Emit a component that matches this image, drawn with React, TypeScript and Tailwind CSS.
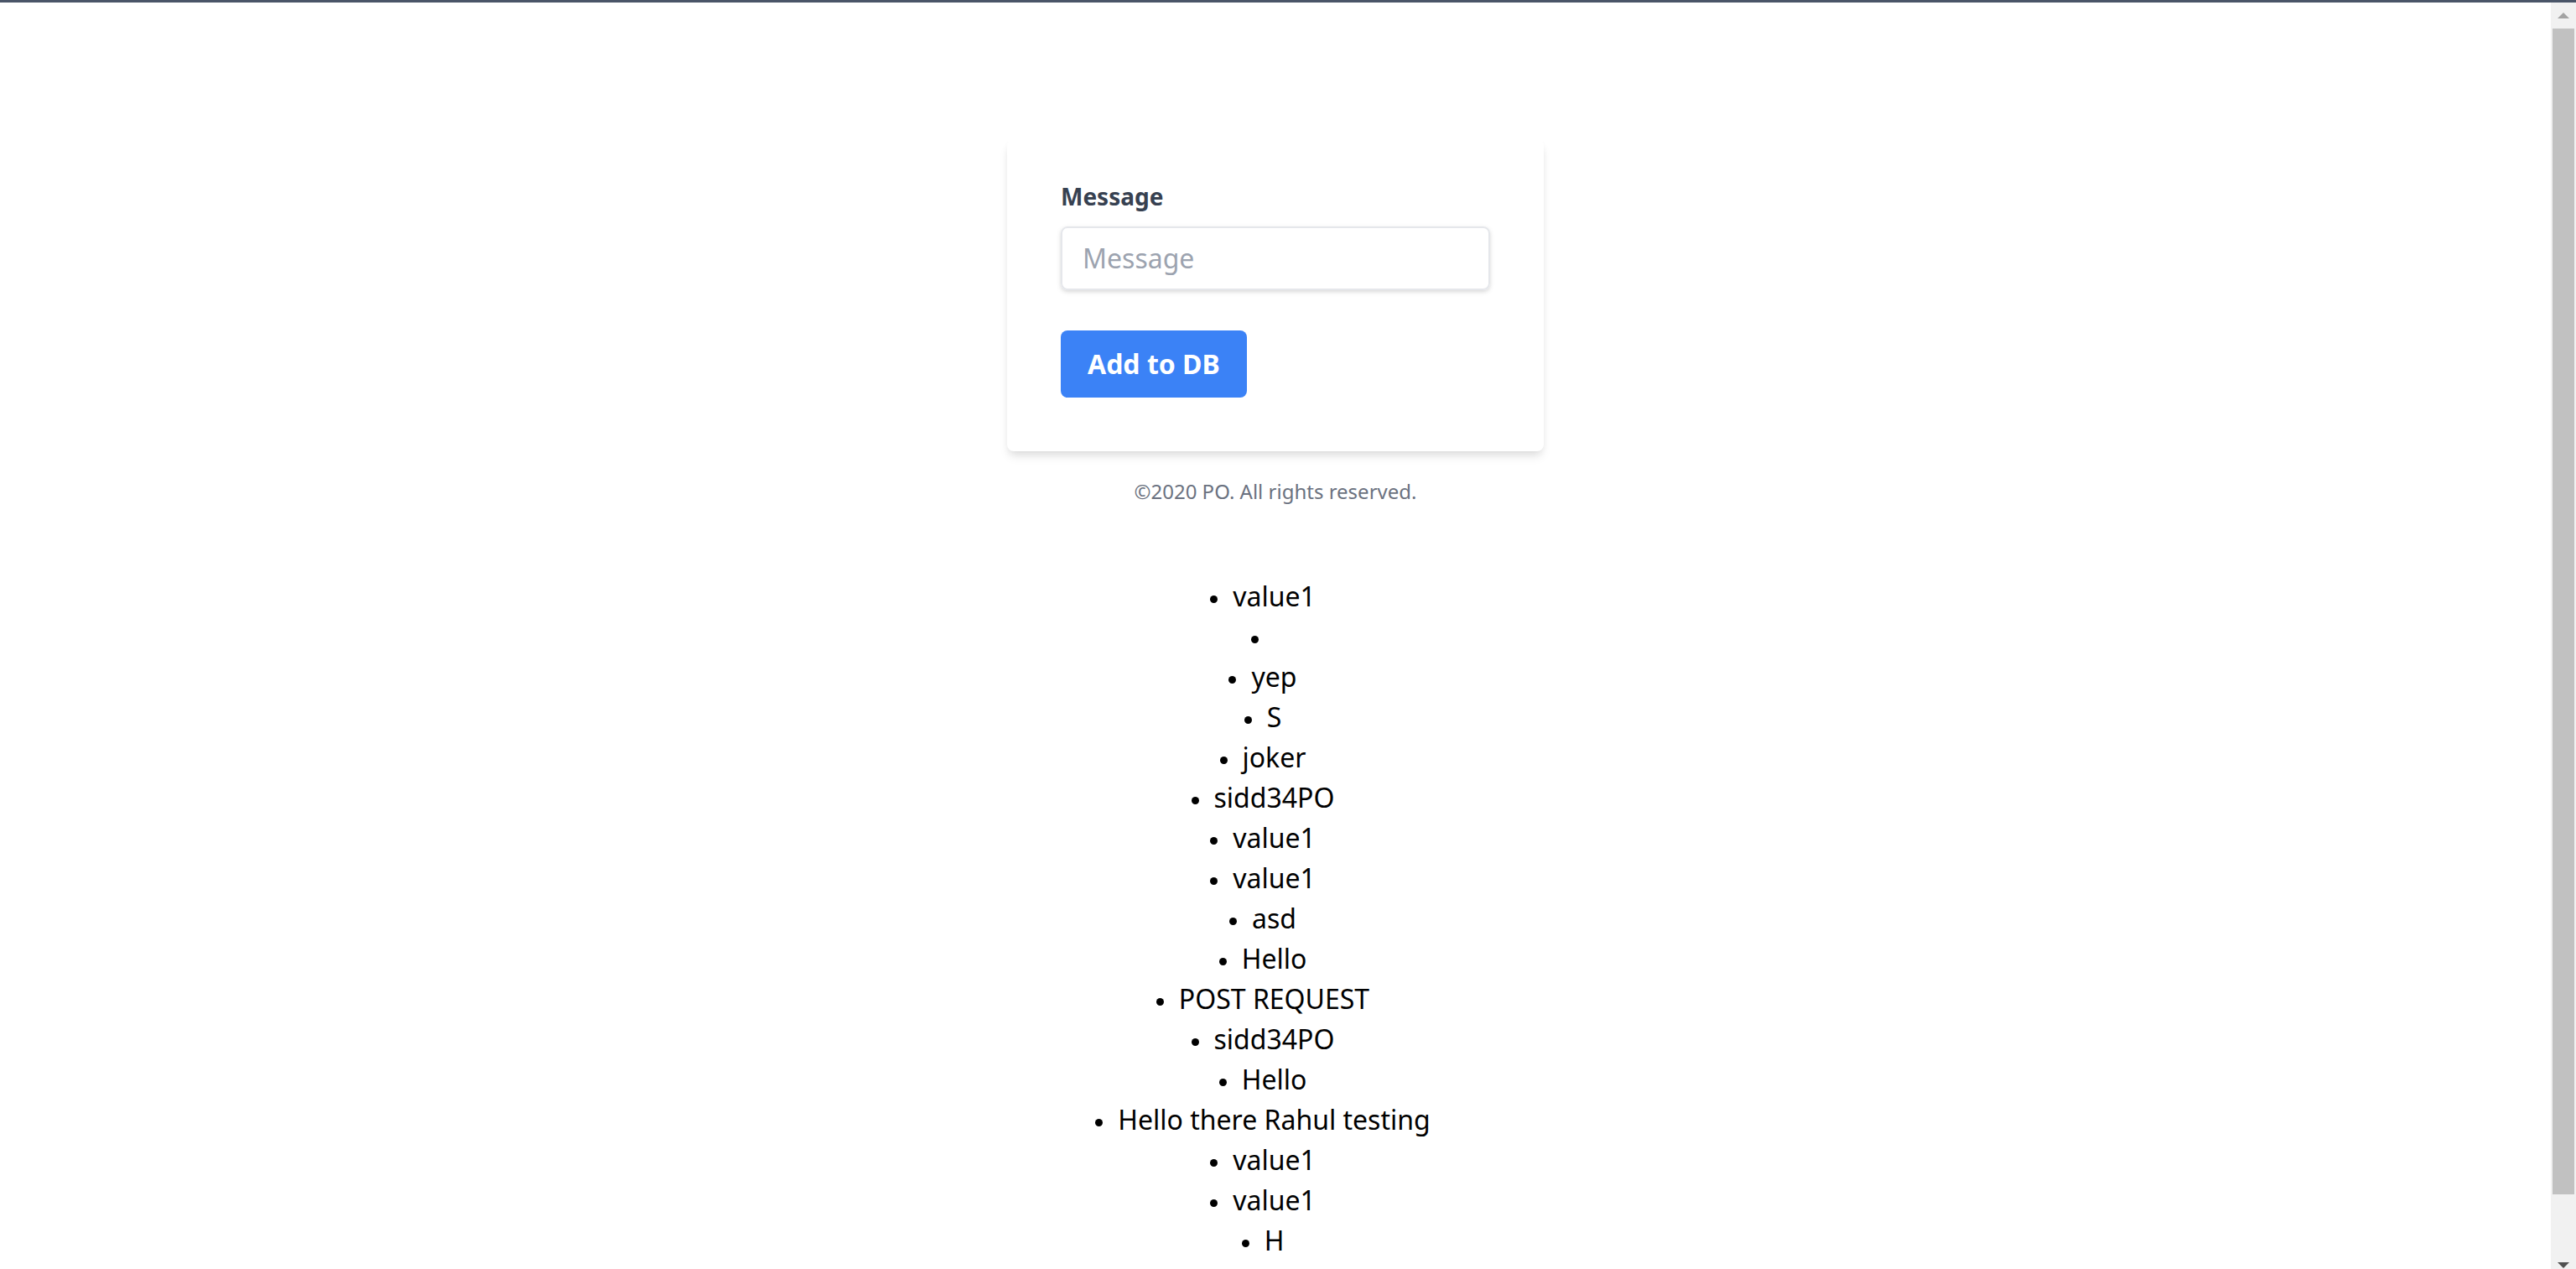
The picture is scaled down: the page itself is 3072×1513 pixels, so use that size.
import { useState } from 'react';

const messages = [
  'value1',
  '',
  'yep',
  'S',
  'joker',
  'sidd34PO',
  'value1',
  'value1',
  'asd',
  'Hello',
  'POST REQUEST',
  'sidd34PO',
  'Hello',
  'Hello there Rahul testing',
  'value1',
  'value1',
  'H',
  'value1',
];

function Scrollbar() {
  return (
    <div className="w-[30px] shrink-0 flex flex-col bg-[#f1f1f1]">
      <div className="h-[31px] flex items-center justify-center">
        <svg width="14" height="7" viewBox="0 0 14 7">
          <polygon points="0,7 7,0 14,7" fill="#a3a3a3" />
        </svg>
      </div>
      <div className="flex-1 flex flex-col px-[2px]">
        <div className="h-[1390px] bg-[#c1c1c1]" />
      </div>
      <div className="h-[30px] flex items-end justify-center pb-[1px]">
        <svg width="14" height="7" viewBox="0 0 14 7">
          <polygon points="0,0 14,0 7,7" fill="#505050" />
        </svg>
      </div>
    </div>
  );
}

export default function App() {
  const [message, setMessage] = useState('');

  return (
    <div className="h-screen flex flex-col bg-white font-['Noto_Sans',sans-serif]">
      {/* top rule */}
      <div className="h-[3px] shrink-0 bg-[#4a5568]" />

      <div className="flex-1 flex min-h-0">
        <div className="flex-1 overflow-hidden">
          <div className="flex flex-col items-center pt-[163px] pb-6">
            {/* Form card */}
            <form
              onSubmit={(e) => e.preventDefault()}
              className="w-[640px] bg-white shadow-[0_8px_12px_-2px_rgba(0,0,0,0.1),0_4px_8px_-2px_rgba(0,0,0,0.06)] rounded-lg px-16 pt-12 pb-16 mb-8"
            >
              <div className="mb-12">
                <label htmlFor="message" className="block text-[#374151] text-[28px] leading-[40px] font-bold mb-4">
                  Message
                </label>
                <input
                  id="message"
                  type="text"
                  placeholder="Message"
                  value={message}
                  onChange={(e) => setMessage(e.target.value)}
                  className="block w-full appearance-none border-2 border-[#e5e7eb] rounded-lg py-4 px-6 text-[32px] leading-[40px] text-[#374151] placeholder-[#9ca3af] shadow-[0_2px_6px_0_rgba(0,0,0,0.1),0_2px_4px_0_rgba(0,0,0,0.06)] focus:outline-none"
                />
              </div>
              <button
                type="submit"
                className="bg-[#3b82f6] hover:bg-[#1d4ed8] text-white text-[32px] leading-[48px] font-bold py-4 px-8 rounded-lg"
              >
                Add to DB
              </button>
            </form>

            <p className="text-center text-[#6b7280] text-[24px] leading-[32px]">©2020 PO. All rights reserved.</p>

            {/* Stored messages */}
            <ul className="mt-[85px] pr-[30px] text-center text-black text-[32px] leading-[48px]">
              {messages.map((m, i) => (
                <li key={i}>
                  <span className="inline-block w-[9px] h-[9px] rounded-full bg-black mr-[18px] align-middle" />
                  {m}
                </li>
              ))}
            </ul>
          </div>
        </div>

        <Scrollbar />
      </div>
    </div>
  );
}
